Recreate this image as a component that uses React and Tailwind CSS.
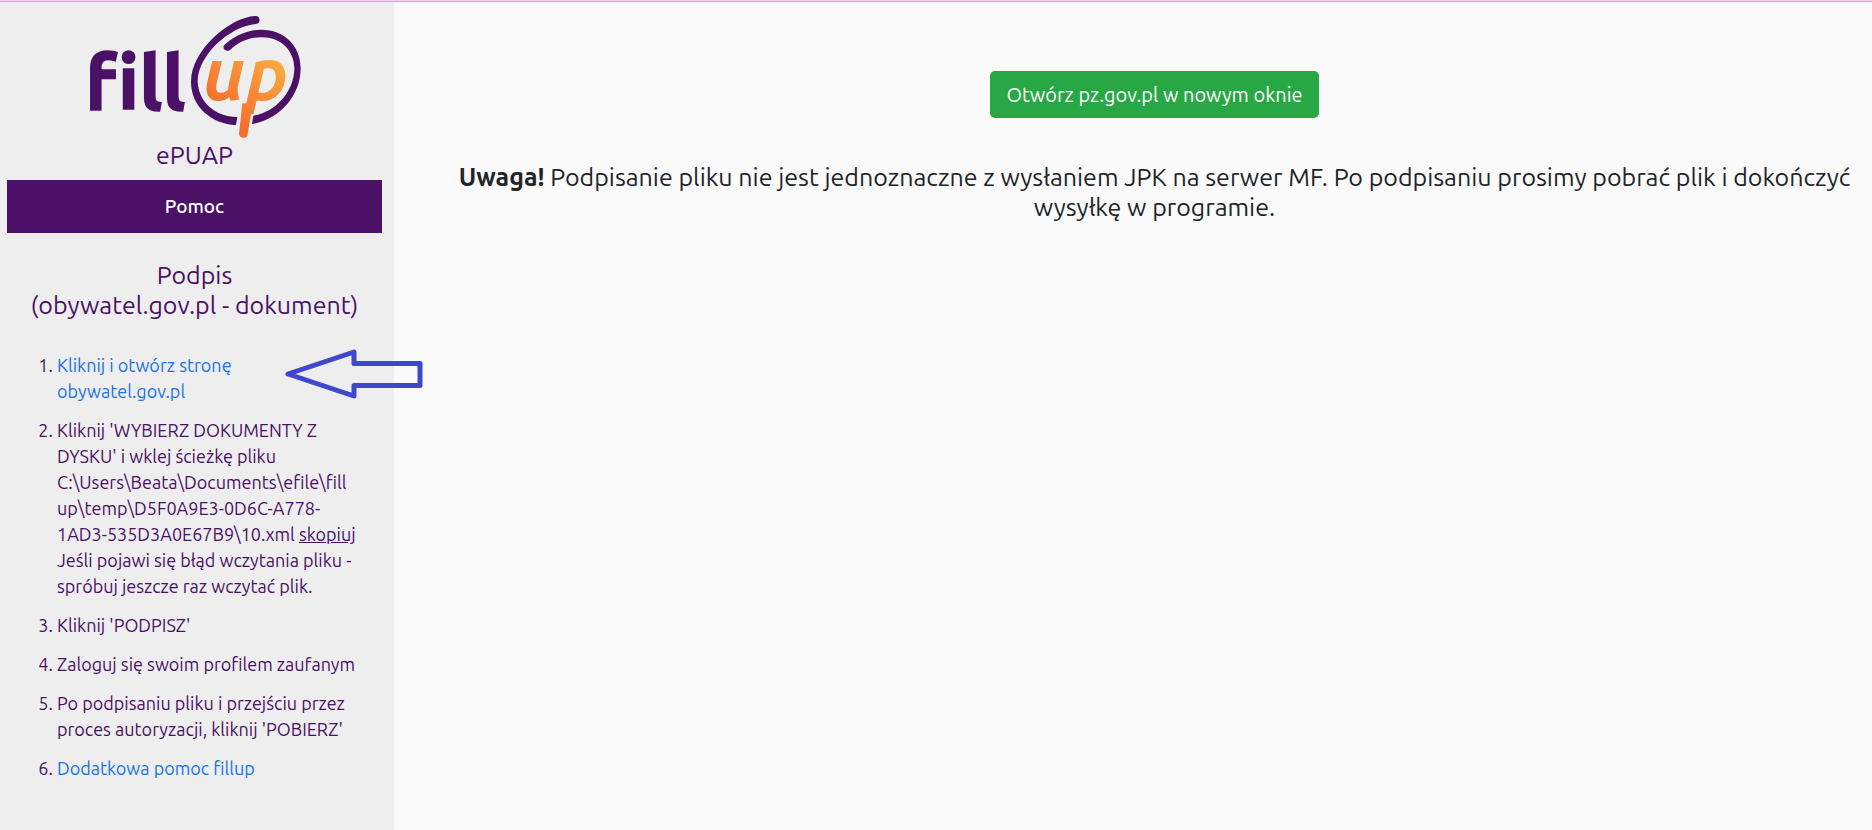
function Logo() {
  return (
    <svg viewBox="45 30 660 390" className="h-[130px] w-[220px]" role="img" aria-label="fillup">
      <defs>
        <linearGradient id="orange" gradientUnits="userSpaceOnUse" x1="470" y1="340" x2="620" y2="150">
          <stop offset="0" stopColor="#f4702f" />
          <stop offset="1" stopColor="#fbb040" />
        </linearGradient>
      </defs>
      <g fill="#4b1166">
        <text x="46" y="331" stroke="#4b1166" strokeWidth="5" className="font-['Ubuntu_Condensed','Ubuntu',sans-serif] text-[228px] font-bold [font-variant-ligatures:none]">fill</text>
        <path d="M555 48C480 52 363 150 363 245C363 320 425 372 498 375L502 351C430 350 385 300 383 245C383 165 480 78 558 72A12 12 0 0 0 555 48Z" />
        <path d="M463 135C490 110 530 89 575 89C640 89 692 135 692 205C692 290 625 360 546 372L550 347C615 338 673 275 673 205C673 150 630 110 572 112C535 112 505 127 480 150C468 158 455 145 463 135Z" />
      </g>
      <g fill="url(#orange)">
        <text x="400" y="300" className="font-['Ubuntu','Lato',sans-serif] text-[220px] font-bold italic">up</text>
        <path d="M517 310L549 310L533 402C535 415 509 419 507 402Z" />
      </g>
    </svg>
  );
}

function Arrow() {
  return (
    <svg viewBox="0 0 140 52" className="pointer-events-none absolute -top-[4px] left-[227px] h-[52px] w-[140px]" aria-hidden="true">
      <path d="M4 26L70 4V15.500H136V37.500H70V48Z" fill="none" stroke="#3f48cc" strokeWidth="5" strokeLinejoin="round" />
    </svg>
  );
}

export default function App() {
  return (
    <div className="flex min-h-screen flex-col bg-[#fafafa] font-['Ubuntu','Noto_Sans',sans-serif] text-[#212529]">
      <div className="h-[2px] border-b border-[#d3a5d8] bg-[#f0d5f3]" />
      <div className="flex grow">
        <aside className="w-[394px] shrink-0 bg-[#eeeeee] pt-2 pr-3 pb-8 pl-[7px] text-[#4b1166]">
          <div className="flex justify-center">
            <Logo />
          </div>
          <h1 className="text-center text-[25px] leading-[30px]">ePUAP</h1>
          <button className="mt-[10px] h-[53px] w-full bg-[#4b1166] text-[19px] font-medium text-white">Pomoc</button>
          <h2 className="mt-[27px] text-center text-[25px] leading-[30px]">
            Podpis
            <br />
            (obywatel.gov.pl - dokument)
          </h2>
          <ol className="mt-8 flex list-decimal flex-col gap-[13px] pl-[50px] text-[18px] leading-[26px]">
            <li className="relative">
              <a href="#obywatel" className="text-[#1a73e8]">
                Kliknij i otwórz stronę
                <br />
                obywatel.gov.pl
              </a>
              <Arrow />
            </li>
            <li>
              Kliknij 'WYBIERZ DOKUMENTY Z
              <br />
              DYSKU' i wklej ścieżkę pliku
              <br />
              C:\Users\Beata\Documents\efile\fill
              <br />
              up\temp\D5F0A9E3-0D6C-A778-
              <br />
              1AD3-535D3A0E67B9\10.xml <a href="#skopiuj" className="underline">skopiuj</a>
              <br />
              Jeśli pojawi się błąd wczytania pliku -
              <br />
              spróbuj jeszcze raz wczytać plik.
            </li>
            <li>Kliknij 'PODPISZ'</li>
            <li>Zaloguj się swoim profilem zaufanym</li>
            <li>
              Po podpisaniu pliku i przejściu przez
              <br />
              proces autoryzacji, kliknij 'POBIERZ'
            </li>
            <li>
              <a href="#pomoc" className="text-[#1a73e8]">Dodatkowa pomoc fillup</a>
            </li>
          </ol>
        </aside>
        <main className="min-w-0 grow pt-[69px] pr-[5px] pl-12 text-center">
          <a href="#pz" className="inline-flex h-[47px] items-center rounded-[5px] bg-[#28a745] px-4 text-[20px] text-white">
            Otwórz pz.gov.pl w nowym oknie
          </a>
          <p className="mt-11 text-[25px] leading-[30px]">
            <strong className="font-bold">Uwaga!</strong> Podpisanie pliku nie jest jednoznaczne z wysłaniem JPK na serwer MF. Po podpisaniu prosimy pobrać plik i dokończyć wysyłkę w programie.
          </p>
        </main>
      </div>
    </div>
  );
}
